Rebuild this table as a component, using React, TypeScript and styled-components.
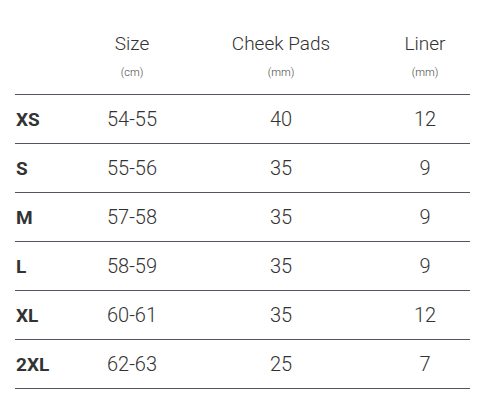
import React from "react";
import styled, { createGlobalStyle } from "styled-components";

const Global = createGlobalStyle`
  html, body { margin: 0; padding: 0; background: #fff; }
  body { font-family: Roboto, "Noto Sans", sans-serif; color: #333; }
`;

const Table = styled.div`
  width: 455px;
  margin: 0 0 0 15px;
  padding-top: 34px;
`;

const Grid = styled.div`
  display: grid;
  grid-template-columns: 67px 100px 198px 90px;
  align-items: center;
`;

const HeaderRow = styled(Grid)`
  height: 60px;
  align-items: start;
  border-bottom: 1px solid #5a5260;
`;

const HeadCell = styled.div`
  display: flex;
  flex-direction: column;
  align-items: center;
  text-align: center;
`;

const HeadTitle = styled.span`
  font-size: 19px;
  font-weight: 300;
  line-height: 20px;
  color: #333;
`;

const HeadUnit = styled.span`
  margin-top: 13px;
  font-size: 11px;
  font-weight: 300;
  line-height: 12px;
  color: #444;
`;

const Row = styled(Grid)`
  height: 48px;
  border-bottom: 1px solid #5a5260;
`;

const Label = styled.div`
  font-size: 19px;
  font-weight: 700;
  color: #333;
  padding-left: 1px;
`;

const Value = styled.div`
  font-size: 20px;
  font-weight: 300;
  color: #333;
  text-align: center;
`;

const rows = [
  ["XS", "54-55", "40", "12"],
  ["S", "55-56", "35", "9"],
  ["M", "57-58", "35", "9"],
  ["L", "58-59", "35", "9"],
  ["XL", "60-61", "35", "12"],
  ["2XL", "62-63", "25", "7"],
];

export default function App() {
  return (
    <>
      <Global />
      <Table>
        <HeaderRow>
          <div />
          <HeadCell>
            <HeadTitle>Size</HeadTitle>
            <HeadUnit>(cm)</HeadUnit>
          </HeadCell>
          <HeadCell>
            <HeadTitle>Cheek Pads</HeadTitle>
            <HeadUnit>(mm)</HeadUnit>
          </HeadCell>
          <HeadCell>
            <HeadTitle>Liner</HeadTitle>
            <HeadUnit>(mm)</HeadUnit>
          </HeadCell>
        </HeaderRow>
        {rows.map((r) => (
          <Row key={r[0]}>
            <Label>{r[0]}</Label>
            <Value>{r[1]}</Value>
            <Value>{r[2]}</Value>
            <Value>{r[3]}</Value>
          </Row>
        ))}
      </Table>
    </>
  );
}
